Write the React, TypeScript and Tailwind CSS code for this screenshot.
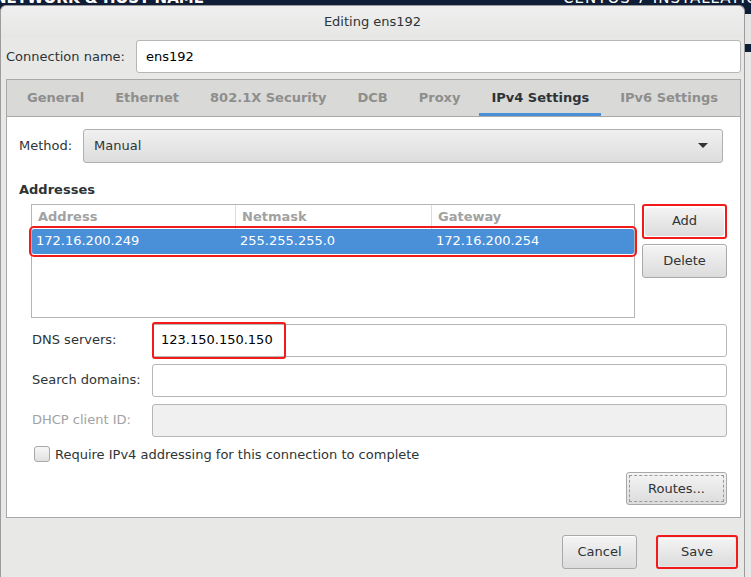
import React from 'react';

const font = { fontFamily: '"DejaVu Sans", "Liberation Sans", sans-serif' };

const tabs = ['General', 'Ethernet', '802.1X Security', 'DCB', 'Proxy', 'IPv4 Settings', 'IPv6 Settings'];

function GtkButton({ label, className = '' }: { label: string; className?: string }) {
  return (
    <div
      className={`flex items-center justify-center rounded-[3px] border border-[#a9a9a9] bg-gradient-to-b from-[#f4f4f4] to-[#dcdcdc] text-[13px] text-[#2e3436] shadow-[inset_0_1px_0_#fff] ${className}`}
    >
      {label}
    </div>
  );
}

function Entry({
  disabled = false,
  className = '',
  children,
}: {
  disabled?: boolean;
  className?: string;
  children?: React.ReactNode;
}) {
  return (
    <div
      className={`relative flex h-[33px] flex-1 items-center rounded-[3px] border border-[#b6b6b3] pl-[8px] text-[13px] text-black ${
        disabled ? 'bg-[#f0f0f0]' : 'bg-white'
      } ${className}`}
    >
      {children}
    </div>
  );
}

export default function App() {
  return (
    <div className="flex h-[577px] w-[751px] flex-col overflow-hidden bg-[#0f1d36]" style={font}>
      {/* installer header peeking above the dialog */}
      <div className="flex h-[5px] shrink-0 justify-between overflow-hidden text-[15px] font-bold leading-[5px] text-white">
        <span className="-ml-[6px] mt-[-4px]">NETWORK &amp; HOST NAME</span>
        <span className="mr-[-20px] mt-[-4px] font-normal tracking-[1px]">CENTOS 7 INSTALLATION</span>
      </div>

      <div className="flex flex-1">
        {/* dialog */}
        <div className="flex w-[745px] shrink-0 flex-col rounded-t-[6px] border border-b-0 border-[#9c9c9c] bg-[#e8e8e7] text-[#2e3436]">
          <div className="flex h-[32px] shrink-0 items-center justify-center rounded-t-[6px] bg-gradient-to-b from-[#efefef] to-[#e6e6e5] text-[13px]">
            Editing ens192
          </div>

          {/* connection name */}
          <div className="mt-[2px] flex items-center pl-[5px] pr-[3px]">
            <span className="w-[130px] text-[13px]">Connection name:</span>
            <Entry className="pl-[9px]">ens192</Entry>
          </div>

          {/* notebook */}
          <div className="ml-[5px] mr-[3px] mt-[6px] flex flex-col border border-[#a9a9a9]">
            <div className="flex h-[37px] items-stretch gap-[31px] border-b border-[#a9a9a9] bg-[#d9d9d8] pl-[20px]">
              {tabs.map((t) => (
                <div
                  key={t}
                  className={`flex items-center border-b-[3px] pt-[3px] text-[13px] font-bold ${
                    t === 'IPv4 Settings'
                      ? '-mx-[12px] border-[#4a90d9] px-[12px] text-[#2e3436]'
                      : 'border-transparent text-[#8e8e8c]'
                  }`}
                >
                  {t}
                </div>
              ))}
            </div>

            <div className="flex h-[400px] flex-col bg-white pl-[12px] pr-[13px]">
              {/* method */}
              <div className="mr-[4px] mt-[12px] flex items-center">
                <span className="w-[64px] text-[13px]">Method:</span>
                <div className="flex h-[34px] flex-1 items-center justify-between rounded-[3px] border border-[#b0b0b0] bg-gradient-to-b from-[#f0f0f0] to-[#dddddd] pl-[10px] pr-[14px] text-[13px]">
                  <span>Manual</span>
                  <svg width="10" height="6" viewBox="0 0 10 6">
                    <path d="M0 0 L10 0 L5 5 Z" fill="#2e3436" />
                  </svg>
                </div>
              </div>

              <div className="mt-[17px] text-[13px] font-bold">Addresses</div>

              {/* address table + buttons */}
              <div className="mt-[4px] flex gap-[7px] pl-[12px]">
                <div className="h-[114px] flex-1 border border-[#b5b5b5] bg-white">
                  <div className="grid h-[24px] grid-cols-[204px_196px_1fr] text-[13px] font-bold text-[#a2a2a2]">
                    <div className="flex items-center border-r border-[#dcdcdc] pl-[6px]">Address</div>
                    <div className="flex items-center border-r border-[#dcdcdc] pl-[6px]">Netmask</div>
                    <div className="flex items-center pl-[6px]">Gateway</div>
                  </div>
                  <div className="grid h-[25px] grid-cols-[204px_196px_1fr] rounded-[2px] bg-[#4a90d9] text-[13px] text-white outline-2 outline-offset-[1px] outline-[#f21b1b]">
                    <div className="flex items-center pl-[4px]">172.16.200.249</div>
                    <div className="flex items-center pl-[4px]">255.255.255.0</div>
                    <div className="flex items-center pl-[4px]">172.16.200.254</div>
                  </div>
                </div>
                <div className="flex w-[85px] flex-col gap-[5px]">
                  <div className="h-[35px] rounded-[3px] border-2 border-[#f21b1b] p-[1px]">
                    <GtkButton label="Add" className="h-full border-0" />
                  </div>
                  <GtkButton label="Delete" className="h-[34px]" />
                </div>
              </div>

              {/* dns etc */}
              <div className="mt-[6px] flex flex-col gap-[7px] pl-[13px]">
                <div className="flex items-center">
                  <span className="w-[120px] text-[13px]">DNS servers:</span>
                  <Entry>
                    123.150.150.150
                    {/* highlight frame from the annotated screenshot */}
                    <div className="absolute -left-[1px] -top-[3px] h-[37px] w-[134px] rounded-[3px] border-2 border-[#f21b1b]" />
                  </Entry>
                </div>
                <div className="flex items-center">
                  <span className="w-[120px] text-[13px]">Search domains:</span>
                  <Entry />
                </div>
                <div className="flex items-center">
                  <span className="w-[120px] text-[13px] text-[#a2a2a2]">DHCP client ID:</span>
                  <Entry disabled />
                </div>
              </div>

              <div className="mt-[8px] flex items-center gap-[5px] pl-[15px]">
                <div className="h-[16px] w-[16px] rounded-[3px] border border-[#a8a8a8] bg-gradient-to-b from-[#f7f7f7] to-[#e0e0e0]" />
                <span className="text-[13px]">Require IPv4 addressing for this connection to complete</span>
              </div>

              <div className="mt-[8px] flex justify-end">
                <div className="rounded-[3px] border border-[#a9a9a9] bg-gradient-to-b from-[#f4f4f4] to-[#dcdcdc] p-[2px]">
                  <div className="flex h-[27px] w-[95px] items-center justify-center border border-dashed border-[#9a9a9a] text-[13px]">
                    Routes...
                  </div>
                </div>
              </div>
            </div>
          </div>

          {/* footer */}
          <div className="mt-[17px] flex items-start justify-end gap-[19px] pr-[6px]">
            <GtkButton label="Cancel" className="h-[34px] w-[75px]" />
            <div className="h-[34px] rounded-[3px] border-2 border-[#f21b1b] p-[1px]">
              <GtkButton label="Save" className="h-full w-[76px] border-0" />
            </div>
          </div>
        </div>

        {/* background strip on the right */}
        <div className="flex flex-1 flex-col">
          <div className="h-[9px] bg-[#0f1d36]" />
          <div className="h-[30px] bg-[#e4e4e4]" />
          <div className="h-[8px] bg-[#0f1d36]" />
          <div className="flex-1 bg-[#e8e8e8]" />
        </div>
      </div>
    </div>
  );
}
